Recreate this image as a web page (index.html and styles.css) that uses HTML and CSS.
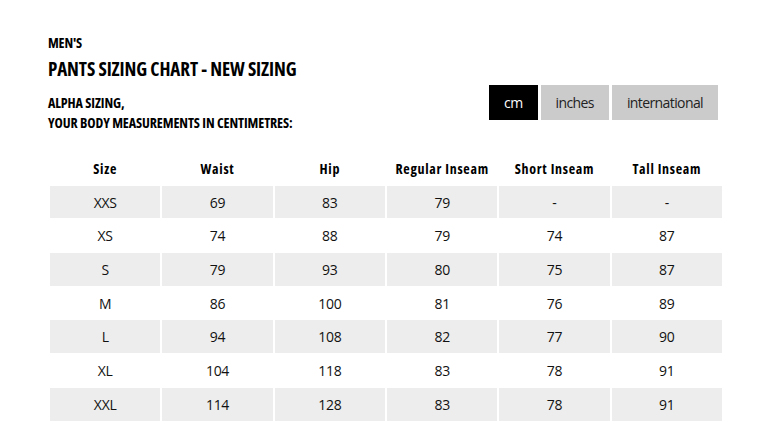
FILE: index.html
```html
<!DOCTYPE html>
<html lang="en">
<head>
<meta charset="utf-8">
<title>Men's Pants Sizing Chart</title>
<link rel="stylesheet" href="styles.css">
</head>
<body>
<div class="page">
  <div class="kicker">MEN'S</div>
  <h1 class="title">PANTS SIZING CHART - NEW SIZING</h1>
  <div class="bar">
    <div class="subtitle">ALPHA SIZING,<br>YOUR BODY MEASUREMENTS IN CENTIMETRES:</div>
    <div class="units">
      <button class="unit active">cm</button>
      <button class="unit">inches</button>
      <button class="unit">international</button>
    </div>
  </div>
  <table class="chart">
    <thead>
      <tr><th>Size</th><th>Waist</th><th>Hip</th><th>Regular Inseam</th><th>Short Inseam</th><th>Tall Inseam</th></tr>
    </thead>
    <tbody>
      <tr class="alt"><td>XXS</td><td>69</td><td>83</td><td>79</td><td>-</td><td>-</td></tr>
      <tr><td>XS</td><td>74</td><td>88</td><td>79</td><td>74</td><td>87</td></tr>
      <tr class="alt"><td>S</td><td>79</td><td>93</td><td>80</td><td>75</td><td>87</td></tr>
      <tr><td>M</td><td>86</td><td>100</td><td>81</td><td>76</td><td>89</td></tr>
      <tr class="alt"><td>L</td><td>94</td><td>108</td><td>82</td><td>77</td><td>90</td></tr>
      <tr><td>XL</td><td>104</td><td>118</td><td>83</td><td>78</td><td>91</td></tr>
      <tr class="alt"><td>XXL</td><td>114</td><td>128</td><td>83</td><td>78</td><td>91</td></tr>
    </tbody>
  </table>
</div>
</body>
</html>
```
FILE: styles.css
```css
html, body {
  margin: 0;
  padding: 0;
  background: #fff;
}
body {
  font-family: "Open Sans", "DejaVu Sans", sans-serif;
  color: #000;
}
.page {
  width: 676px;
  padding: 33px 0 0 48px;
}
.kicker {
  font-size: 14px;
  line-height: 20px;
  font-weight: 700;
  font-stretch: condensed;
  letter-spacing: -0.2px;
}
.title {
  margin: 3px 0 0;
  font-size: 19px;
  line-height: 26px;
  font-weight: 700;
  font-stretch: condensed;
  letter-spacing: -0.1px;
}
.bar {
  margin-top: 3px;
  display: flex;
  justify-content: space-between;
  align-items: flex-start;
}
.subtitle {
  padding-top: 8px;
  font-size: 14px;
  line-height: 20px;
  font-weight: 700;
  font-stretch: condensed;
  letter-spacing: -0.1px;
}
.units {
  display: flex;
  gap: 3px;
  margin-right: 6px;
}
.unit {
  height: 35px;
  padding: 0 15px;
  border: 0;
  border-radius: 0;
  background: #cbcbcb;
  color: #222;
  font-family: "Open Sans", "DejaVu Sans", sans-serif;
  font-size: 14px;
  letter-spacing: -0.6px;
  cursor: pointer;
}
.unit.active {
  background: #000;
  color: #fff;
}
.chart {
  margin-top: 18px;
  width: 676px;
  border-collapse: separate;
  border-spacing: 2px 1px;
  table-layout: fixed;
  font-size: 14px;
}
.chart th,
.chart td {
  height: 32.7px;
  padding: 0;
  text-align: center;
  vertical-align: middle;
}
.chart th {
  font-weight: 700;
  font-stretch: condensed;
  letter-spacing: 0.7px;
}
.chart td {
  color: #111;
  letter-spacing: -0.3px;
}
.chart tr.alt td {
  background: #ededed;
}
```
